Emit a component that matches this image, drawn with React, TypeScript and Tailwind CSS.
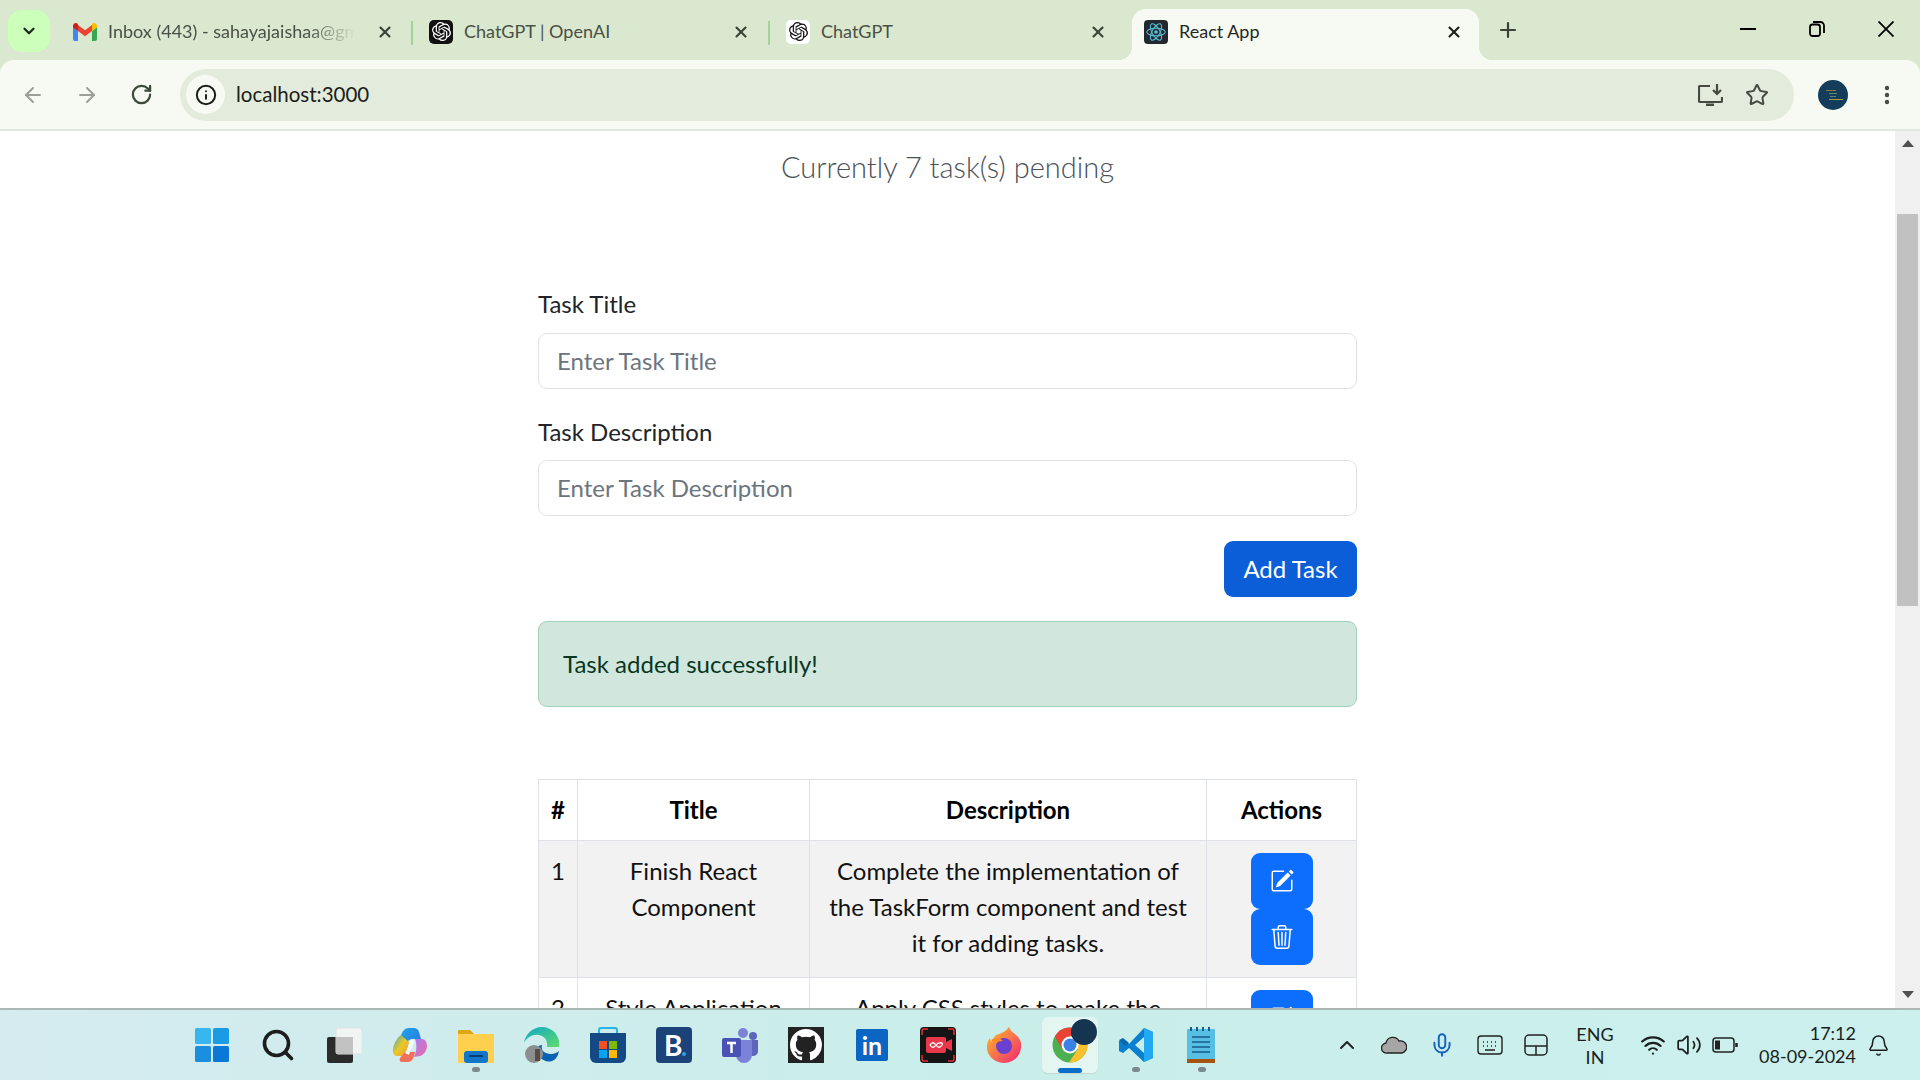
import React from 'react';
import { BsPencilSquare, BsTrash3 } from 'react-icons/bs';
import { SiOpenai } from 'react-icons/si';
import {
  ArrowLeft,
  ArrowRight,
  RotateCw,
  Info,
  X,
  Plus,
  Star,
  MoreVertical,
  ChevronDown,
  ChevronUp,
  Search,
  Mic,
  Bell,
  Wifi,
  Volume2,
} from 'lucide-react';

const font = "font-['Lato','Noto_Sans',sans-serif]";

function OpenAiMark({ dark }: { dark: boolean }) {
  return (
    <div className={`w-[24px] h-[24px] rounded-[5px] flex items-center justify-center ${dark ? 'bg-[#111] text-white' : 'bg-white text-[#111]'}`}>
      <SiOpenai size={19} />
    </div>
  );
}

function ReactMark() {
  return (
    <div className="w-[24px] h-[24px] rounded-[4px] bg-[#23272f] flex items-center justify-center">
      <svg width="22" height="22" viewBox="-12 -12 24 24" fill="none" stroke="#58c4dc" strokeWidth="1.1">
        <circle r="2" fill="#58c4dc" stroke="none" />
        <ellipse rx="10" ry="4.2" />
        <ellipse rx="10" ry="4.2" transform="rotate(60)" />
        <ellipse rx="10" ry="4.2" transform="rotate(120)" />
      </svg>
    </div>
  );
}

function GmailMark() {
  return (
    <svg width="24" height="20" viewBox="0 0 24 18">
      <path d="M0 4v12a2 2 0 0 0 2 2h3V8z" fill="#4285f4" />
      <path d="M24 4v12a2 2 0 0 1-2 2h-3V8z" fill="#34a853" />
      <path d="M19 2v6l5-3.6V3c0-2.4-2.8-3.8-4.8-2.2z" fill="#fbbc04" />
      <path d="M5 8V2l7 5.2L19 2v6l-7 5.2z" fill="#ea4335" />
      <path d="M0 3v1.400l5 3.600V2l-.200-1.200C2.800-.8 0 .6 0 3z" fill="#c5221f" />
    </svg>
  );
}

function Tab({ icon, title, active, className, fade }: { icon: React.ReactNode; title: string; active?: boolean; className: string; fade?: boolean }) {
  return (
    <div
      className={`${className} h-[51px] shrink-0 flex items-center pb-[6px] ${
        active
          ? "relative bg-[#f7faf2] rounded-t-[14px] before:content-[''] before:absolute before:left-[-14px] before:bottom-0 before:w-[14px] before:h-[14px] before:bg-[radial-gradient(circle_at_0_0,transparent_14px,#f7faf2_14.5px)] after:content-[''] after:absolute after:right-[-14px] after:bottom-0 after:w-[14px] after:h-[14px] after:bg-[radial-gradient(circle_at_100%_0,transparent_14px,#f7faf2_14.5px)]"
          : ''
      }`}
    >
      <div className="w-[24px] flex justify-center shrink-0">{icon}</div>
      <div
        className={`ml-[11px] flex-1 overflow-hidden whitespace-nowrap text-[18px] ${active ? 'text-[#23291f]' : 'text-[#4a5045]'} ${
          fade ? 'mask-r-from-80% mask-r-to-100%' : ''
        }`}
      >
        {title}
      </div>
      <X size={18} strokeWidth={2.8} className={`${active ? 'text-[#1e2419]' : 'text-[#3c4237]'} ${fade ? 'ml-[21px]' : 'ml-2'}`} />
    </div>
  );
}

function TabStrip() {
  return (
    <div className="h-[60px] flex items-end relative">
      <div className="w-[42px] h-[42px] mb-[8px] ml-[8px] rounded-[14px] bg-[#ccffb9] flex items-center justify-center shrink-0">
        <ChevronDown size={18} strokeWidth={3} className="text-[#1d2a1b]" />
      </div>
      <div className="ml-[11px] flex items-end">
        <Tab className="w-[350px] pl-[12px] pr-[17px]" icon={<GmailMark />} title="Inbox (443) - sahayajaishaa@gmail.com" fade />
        <div className="w-[2px] h-[24px] mb-[15px] bg-[#a5d29a]" />
        <Tab className="w-[355px] pl-[16px] pr-[18px]" icon={<OpenAiMark dark />} title="ChatGPT | OpenAI" />
        <div className="w-[2px] h-[24px] mb-[15px] bg-[#a5d29a]" />
        <Tab className="w-[362px] pl-[16px] pr-[25px]" icon={<OpenAiMark dark={false} />} title="ChatGPT" />
        <Tab className="w-[347px] pl-[12px] pr-[16px]" icon={<ReactMark />} title="React App" active />
      </div>
      <Plus size={24} strokeWidth={2.2} className="ml-[17px] mb-[18px] text-[#3c4237]" />
      <div className="ml-auto h-full flex items-center pb-[2px] text-black">
        <div className="w-[69px] flex justify-center">
          <svg width="16" height="16" viewBox="0 0 16 16" stroke="currentColor" strokeWidth="2">
            <path d="M0 8h16" />
          </svg>
        </div>
        <div className="w-[69px] flex justify-center">
          <svg width="16" height="16" viewBox="0 0 16 16" fill="none" stroke="currentColor" strokeWidth="1.800">
            <rect x="1" y="3.500" width="10" height="11.500" rx="2.500" />
            <path d="M4 1h7.500a3.500 3.500 0 0 1 3.500 3.500V12" />
          </svg>
        </div>
        <div className="w-[69px] flex justify-center">
          <svg width="16" height="16" viewBox="0 0 16 16" stroke="currentColor" strokeWidth="1.800">
            <path d="M.5.5l15 15M15.500.5l-15 15" />
          </svg>
        </div>
      </div>
    </div>
  );
}

function Toolbar() {
  return (
    <div className="h-[71px] bg-[#f7faf2] rounded-t-[14px] border-b-[2px] border-[#e3e8dc] flex items-center shrink-0">
      <ArrowLeft size={24} strokeWidth={2} className="ml-[21px] text-[#9aa096]" />
      <ArrowRight size={24} strokeWidth={2} className="ml-[30px] text-[#9aa096]" />
      <RotateCw size={23} strokeWidth={2.3} className="ml-[31px] text-[#3d4a39]" />
      <div className="ml-[27px] w-[1614px] h-[52px] rounded-full bg-[#e3ebdc] flex items-center">
        <div className="ml-[6px] w-[39px] h-[39px] rounded-full bg-[#f7faf2] flex items-center justify-center">
          <Info size={22} strokeWidth={2.2} className="text-[#1a1f18]" />
        </div>
        <span className="ml-[11px] text-[20.5px] text-[#1b2119]">localhost:3000</span>
        <svg width="25" height="22" viewBox="0 0 25 22" fill="none" stroke="#464a42" strokeWidth="2.200" className="ml-auto">
          <path d="M12 2H2a1 1 0 0 0-1 1v14a1 1 0 0 0 1 1h21a1 1 0 0 0 1-1v-4" />
          <path d="M8 21h8" strokeWidth="3" />
          <path d="M19 0v9M15 6l4 4 4-4" />
        </svg>
        <Star size={24} strokeWidth={2} className="ml-[22px] mr-[25px] text-[#464a42]" />
      </div>
      <div className="ml-[24px] w-[30px] h-[30px] rounded-full bg-[#143d5c] flex flex-col items-center justify-center gap-[2px]">
        <div className="w-[10px] h-[1px] ml-[-4px] bg-[#8a7b3c]" />
        <div className="w-[8px] h-[1px] bg-[#5c8a6a]" />
        <div className="w-[6px] h-[1px] bg-[#5c8a6a]" />
        <div className="w-[14px] h-[1px] ml-[6px] bg-[#a8a03c]" />
      </div>
      <MoreVertical size={24} strokeWidth={2.4} className="ml-[27px] text-[#464a42]" />
    </div>
  );
}

function ActionButtons({ cut }: { cut?: boolean }) {
  return (
    <div className="flex flex-col items-center">
      <button className="w-[62px] h-[56px] rounded-[9px] bg-[#0d6efd] text-white flex items-center justify-center">
        <BsPencilSquare size={24} />
      </button>
      {!cut && (
        <button className="w-[62px] h-[56px] rounded-[9px] bg-[#0d6efd] text-white flex items-center justify-center">
          <BsTrash3 size={24} />
        </button>
      )}
    </div>
  );
}

const cell = 'border border-[#dee2e6] px-[12px] py-[12px] align-top text-center';

function TaskPage() {
  return (
    <div className="flex-1 h-full overflow-hidden bg-white pt-[13px] text-[24px] leading-[36px] text-[#212529]">
      <p className="text-center text-[29px] leading-[45px] font-light text-[#4a5157]">Currently 7 task(s) pending</p>
      <div className="w-[819px] ml-[538px] mt-[97px]">
        <label className="block h-[36px]">Task Title</label>
        <div className="mt-[11px] h-[56px] border border-[#dee2e6] rounded-[9px] px-[18px] flex items-center text-[#6c757d]">Enter Task Title</div>
        <label className="block mt-[25px] h-[36px]">Task Description</label>
        <div className="mt-[10px] h-[56px] border border-[#dee2e6] rounded-[9px] px-[18px] flex items-center text-[#6c757d]">Enter Task Description</div>
        <div className="flex justify-end mt-[25px]">
          <button className="w-[133px] h-[56px] rounded-[9px] bg-[#0b5ed7] text-white">Add Task</button>
        </div>
        <div className="mt-[24px] h-[86px] border border-[#a3cfbb] rounded-[9px] bg-[#d1e7dd] text-[#0a3622] px-[24px] flex items-center">Task added successfully!</div>
        <table className="mt-[72px] w-[818px] table-fixed border-collapse">
          <colgroup>
            <col className="w-[39px]" />
            <col className="w-[232px]" />
            <col className="w-[397px]" />
            <col className="w-[150px]" />
          </colgroup>
          <thead>
            <tr className="text-black">
              <th className={cell + ' font-bold !px-0'}>#</th>
              <th className={cell + ' font-bold'}>Title</th>
              <th className={cell + ' font-bold'}>Description</th>
              <th className={cell + ' font-bold'}>Actions</th>
            </tr>
          </thead>
          <tbody>
            <tr className="bg-[#f2f2f2] text-[#111]">
              <td className={cell + ' !px-0'}>1</td>
              <td className={cell}>Finish React Component</td>
              <td className={cell}>Complete the implementation of the TaskForm component and test it for adding tasks.</td>
              <td className={cell}>
                <ActionButtons />
              </td>
            </tr>
            <tr className="text-[#111]">
              <td className={cell + ' !px-0'}>2</td>
              <td className={cell}>Style Application</td>
              <td className={cell}>Apply CSS styles to make the application look nice.</td>
              <td className={cell}>
                <ActionButtons cut />
              </td>
            </tr>
          </tbody>
        </table>
      </div>
    </div>
  );
}

function Scrollbar() {
  return (
    <div className="w-[25px] h-full bg-[#f0f0f0] flex flex-col items-center shrink-0">
      <div className="mt-[9px] w-0 h-0 border-x-[6px] border-x-transparent border-b-[7px] border-b-[#505050]" />
      <div className="mt-[67px] w-[21px] h-[392px] bg-[#c1c1c1]" />
      <div className="mt-auto mb-[10px] w-0 h-0 border-x-[6px] border-x-transparent border-t-[7px] border-t-[#505050]" />
    </div>
  );
}

function TaskIcon({ children, dot, active }: { children: React.ReactNode; dot?: boolean; active?: boolean }) {
  return (
    <div className="relative w-[66px] h-[66px] flex items-center justify-center">
      {active && <div className="absolute left-[5px] top-[5px] w-[56px] h-[56px] rounded-[6px] bg-[#e4f6f2] shadow-[0_1px_1px_#c2d6d2]" />}
      <div className="relative flex items-center justify-center">{children}</div>
      {dot && <div className="absolute bottom-[6px] left-[29px] w-[8px] h-[5px] rounded-full bg-[#7d8a8c]" />}
      {active && <div className="absolute bottom-[5px] left-[21px] w-[24px] h-[5px] rounded-full bg-[#0b6fc9]" />}
    </div>
  );
}

function Taskbar() {
  return (
    <div className="h-[72px] shrink-0 border-t-[2px] border-[#a9b8b5] bg-gradient-to-r from-[#d5ebf0] via-[#c9eee9] to-[#cbf0ee] flex items-center relative">
      <div className="ml-[179px] flex items-center">
        <TaskIcon>
          <svg width="36" height="36" viewBox="0 0 36 36">
            <rect x="1" y="1" width="16" height="16" rx="1.500" fill="#38b6ef" />
            <rect x="19" y="1" width="16" height="16" rx="1.500" fill="#1c9be5" />
            <rect x="1" y="19" width="16" height="16" rx="1.500" fill="#1a8fdf" />
            <rect x="19" y="19" width="16" height="16" rx="1.500" fill="#0a78d6" />
          </svg>
        </TaskIcon>
        <TaskIcon>
          <Search size={36} strokeWidth={2.4} className="text-[#1d1d1d]" />
        </TaskIcon>
        <TaskIcon>
          <svg width="36" height="36" viewBox="0 0 36 36">
            <rect x="1" y="10" width="26" height="26" rx="2" fill="#2b2b2b" />
            <rect x="10" y="1" width="26" height="26" rx="2" fill="#f2f4f4" stroke="#dde2e2" />
            <rect x="10" y="10" width="17" height="17" fill="#c2c2c2" />
          </svg>
        </TaskIcon>
        <TaskIcon>
          <svg width="36" height="36" viewBox="0 0 36 36">
            <defs>
              <linearGradient id="copa" x1="0" y1="0" x2="1" y2="1">
                <stop offset="0" stopColor="#1ea7e8" />
                <stop offset="1" stopColor="#2e6fe0" />
              </linearGradient>
              <linearGradient id="copb" x1="0" y1="0" x2="1" y2="1">
                <stop offset="0" stopColor="#3ca6c8" />
                <stop offset="0.5" stopColor="#e8c72a" />
                <stop offset="1" stopColor="#f0a030" />
              </linearGradient>
              <linearGradient id="copc" x1="0" y1="0" x2="1" y2="1">
                <stop offset="0" stopColor="#a97cf0" />
                <stop offset="1" stopColor="#ec6aa6" />
              </linearGradient>
            </defs>
            <path d="M9 9c1-5 4-8 8-8h5c2 0 4 1 5 4l2 7h-8c-3 0-5 1-6 4l-2 6z" fill="url(#copa)" />
            <path d="M9 8c-4 3-7 8-8 14-.5 4 1 7 4 7h6c2 0 3-2 4-5l2-9c-3-3-6-5-8-7z" fill="url(#copb)" />
            <path d="M23 12h7c3 0 5 3 5 7s-3 9-7 10l-6 1c3-6 3-12 1-18z" fill="url(#copc)" />
            <path d="M13 25h10c-1 6-3 10-7 10h-6c-2 0-3-2-2-4z" fill="#f0705a" />
            <path d="M21 13l-6 14" stroke="#f4fbfb" strokeWidth="4" />
          </svg>
        </TaskIcon>
        <TaskIcon dot>
          <svg width="36" height="36" viewBox="0 0 36 36">
            <path d="M0 4a1 1 0 0 1 1-1h11l4 4h20v6H0z" fill="#dca60f" />
            <rect y="7" width="36" height="29" rx="1" fill="#ffcf4d" />
            <rect x="6" y="24" width="24" height="12" rx="3" fill="#0f76c9" />
            <rect x="11" y="28" width="14" height="2" fill="#083f70" />
          </svg>
        </TaskIcon>
        <TaskIcon>
          <svg width="36" height="36" viewBox="0 0 36 36">
            <defs>
              <linearGradient id="edg" x1="0" y1="0" x2="1" y2="1">
                <stop offset="0" stopColor="#0fa6c9" />
                <stop offset="1" stopColor="#5fdc6c" />
              </linearGradient>
            </defs>
            <path d="M18 0C8 0 1 8 0 16c3-6 9-9 15-8 6 1 9 6 8 12h12c2-10-6-20-17-20z" fill="url(#edg)" />
            <path d="M35 24c-3 3-9 4-13 2-3-1-5-4-4-8-5 0-6 6-4 10s9 8 14 6 6-6 7-10z" fill="#0a62b4" />
            <circle cx="10" cy="27" r="9" fill="#8c8f90" />
            <rect x="11" y="22" width="5" height="12" fill="#5a4b40" />
          </svg>
        </TaskIcon>
        <TaskIcon>
          <svg width="36" height="36" viewBox="0 0 36 36">
            <path d="M9 6V3a2 2 0 0 1 2-2h14a2 2 0 0 1 2 2v3" fill="none" stroke="#25b6e8" strokeWidth="2" />
            <path d="M0 6h36v24a6 6 0 0 1-6 6H6a6 6 0 0 1-6-6z" fill="#134a85" />
            <rect x="9" y="14" width="8" height="8" fill="#f25022" />
            <rect x="19" y="14" width="8" height="8" fill="#7fba00" />
            <rect x="9" y="23" width="8" height="8" fill="#00a4ef" />
            <rect x="19" y="23" width="8" height="8" fill="#ffb900" />
          </svg>
        </TaskIcon>
        <TaskIcon>
          <div className="w-[36px] h-[36px] rounded-[4px] bg-[#1b4279] text-white font-bold text-[28px] leading-[36px] relative pl-[8px]">
            B
            <span className="absolute right-[6px] bottom-[7px] w-[4px] h-[4px] rounded-full bg-[#2aa3e8]" />
          </div>
        </TaskIcon>
        <TaskIcon>
          <svg width="36" height="36" viewBox="0 0 36 36">
            <circle cx="21" cy="6" r="5" fill="#7b83d8" />
            <circle cx="31" cy="9" r="4" fill="#5d65bf" />
            <path d="M26 13h10v11a5 5 0 0 1-9 3z" fill="#5d65bf" />
            <path d="M11 13h19v15a8 8 0 0 1-16 0z" fill="#7b83d8" />
            <rect y="11" width="19" height="19" rx="2" fill="#4a53b5" />
            <path d="M5 16h9M9.500 16v10" stroke="#fff" strokeWidth="2.500" />
          </svg>
        </TaskIcon>
        <TaskIcon>
          <div className="w-[36px] h-[36px] bg-[#222] flex items-center justify-center">
            <svg width="32" height="32" viewBox="0 0 16 16" fill="#fff">
              <path d="M8 0C3.580 0 0 3.580 0 8c0 3.540 2.290 6.530 5.470 7.590.4.070.55-.170.55-.380 0-.190-.010-.820-.010-1.490-2.010.370-2.530-.490-2.690-.940-.090-.230-.480-.940-.820-1.130-.280-.150-.680-.520-.010-.530.630-.010 1.080.580 1.230.820.720 1.210 1.870.870 2.330.660.070-.520.280-.870.510-1.070-1.780-.200-3.640-.890-3.640-3.950 0-.870.310-1.590.820-2.150-.080-.200-.360-1.020.080-2.120 0 0 .670-.210 2.200.820.640-.180 1.320-.270 2-.270s1.360.090 2 .270c1.530-1.040 2.200-.820 2.200-.820.440 1.100.160 1.920.080 2.120.510.560.820 1.270.820 2.150 0 3.070-1.870 3.750-3.650 3.950.290.250.540.730.540 1.480 0 1.070-.010 1.930-.010 2.200 0 .210.150.460.550.380A8.010 8.010 0 0 0 16 8c0-4.420-3.580-8-8-8z" />
            </svg>
          </div>
        </TaskIcon>
        <TaskIcon>
          <div className="w-[32px] h-[32px] rounded-[2px] bg-[#0a66c2] text-white font-bold text-[25px] leading-[32px] text-center">in</div>
        </TaskIcon>
        <TaskIcon>
          <svg width="36" height="36" viewBox="0 0 36 36">
            <rect width="36" height="36" rx="4" fill="#141414" />
            <path d="M2 8V4a2 2 0 0 1 2-2h4M28 2h4a2 2 0 0 1 2 2v4M2 28v4a2 2 0 0 0 2 2h4M34 28v4a2 2 0 0 1-2 2h-4" fill="none" stroke="#e03036" strokeWidth="1.500" />
            <rect x="6" y="10" width="20" height="16" rx="2" fill="#e8374a" />
            <path d="M26 15l6-3v12l-6-3z" fill="#e8374a" />
            <path d="M10 18c2-3 4-3 6 0s4 3 6 0-4-3-6 0-4 3-6 0z" fill="none" stroke="#fff" strokeWidth="1.300" />
          </svg>
        </TaskIcon>
        <TaskIcon>
          <svg width="36" height="36" viewBox="0 0 36 36">
            <defs>
              <linearGradient id="ffx" x1="0" y1="0" x2="1" y2="1">
                <stop offset="0" stopColor="#ffc41f" />
                <stop offset="1" stopColor="#f0247a" />
              </linearGradient>
            </defs>
            <path d="M23 0c1 3 3 5 6 7 5 4 7 9 6 14-1 9-8 15-17 15S0 28 1 19c0-3 1-6 3-8 0 2 1 3 2 4 1-4 3-7 7-8 3-1 7-3 10-7z" fill="url(#ffx)" />
            <circle cx="18" cy="19" r="8" fill="#6b3fcf" />
            <path d="M5 13c4-3 10-2 12 1-4 0-6 1-7 3z" fill="#ff8a1f" />
          </svg>
        </TaskIcon>
        <TaskIcon active>
          <svg width="36" height="36" viewBox="-18 -18 36 36">
            <circle r="17.500" fill="#4caf50" />
            <path d="M-15.200-8.700A17.500 17.500 0 0 1 15.200-8.700L0-8.700-7.600 4.400z" fill="#ea4335" />
            <path d="M15.200-8.700A17.500 17.500 0 0 1-1 17.500L7.600 4.400 0-8.700z" fill="#fbc02d" />
            <circle r="8.500" fill="#fff" />
            <circle r="6.500" fill="#3b82e8" />
          </svg>
          <div className="absolute top-[-8px] right-[-9px] w-[26px] h-[26px] rounded-full bg-[#143450]" />
        </TaskIcon>
        <TaskIcon dot>
          <svg width="36" height="36" viewBox="0 0 36 36">
            <path d="M26 1l9 4v26l-9 4-15-14-6 5-4-2v-10l4-2 6 5z" fill="#0a7fd0" />
            <path d="M26 1l9 4v26l-9 4z" fill="#23a8f2" />
            <path d="M26 10l-9 8 9 8z" fill="#c9eee9" />
            <path d="M1 13l4-2 6 5-4 3z" fill="#0668ad" />
          </svg>
        </TaskIcon>
        <TaskIcon dot>
          <svg width="30" height="38" viewBox="0 0 30 38">
            <rect y="3" width="28" height="31" rx="1" fill="#58bfe4" />
            <rect y="33" width="28" height="4" fill="#a8530e" />
            <path d="M5 11h18M5 16h18M5 21h18M5 26h18" stroke="#135d8c" strokeWidth="1.600" />
            <path d="M4 1v4M10 1v4M16 1v4M22 1v4" stroke="#135d8c" strokeWidth="2" />
          </svg>
        </TaskIcon>
      </div>
      <div className="ml-[100px] flex items-center text-[#1b1f20]">
        <ChevronUp size={24} strokeWidth={2} className="text-[#222]" />
        <svg width="26" height="18" viewBox="0 0 26 18" className="ml-[22px]">
          <path d="M6 17a5 5 0 0 1-1-10 7 7 0 0 1 13-2 6 6 0 0 1 3 12z" fill="#a6a6a6" stroke="#222" strokeWidth="1.300" />
        </svg>
        <Mic size={26} strokeWidth={1.8} className="ml-[22px] text-[#1763c0]" />
        <svg width="26" height="20" viewBox="0 0 26 20" fill="none" stroke="#222" strokeWidth="1.400" className="ml-[22px]">
          <rect x="1" y="1" width="24" height="18" rx="3" />
          <path d="M6 7h1M10 7h1M14 7h1M18 7h1M6 11h1M10 11h1M14 11h1M18 11h1M8 15h10" />
        </svg>
        <svg width="24" height="22" viewBox="0 0 24 22" fill="none" stroke="#222" strokeWidth="1.500" className="ml-[21px]">
          <rect x="1" y="1" width="22" height="20" rx="4" />
          <path d="M1 12h22M12 12v9" />
        </svg>
        <div className="ml-[22px] w-[50px] text-center text-[18px] leading-[23px] mt-[1px]">
          ENG
          <br />
          IN
        </div>
        <Wifi size={26} strokeWidth={2} className="ml-[20px]" />
        <Volume2 size={26} strokeWidth={1.6} className="ml-[10px]" />
        <svg width="26" height="16" viewBox="0 0 26 16" fill="none" stroke="#222" strokeWidth="1.500" className="ml-[10px]">
          <rect x="1" y="1" width="21" height="14" rx="3" />
          <rect x="3" y="3.500" width="5" height="9" fill="#222" stroke="none" />
          <path d="M24.500 6v4" strokeWidth="2.500" />
        </svg>
        <div className="ml-[21px] w-[97px] text-right text-[18px] leading-[23px]">
          17:12
          <br />
          08-09-2024
        </div>
        <Bell size={23} strokeWidth={1.6} className="ml-[11px]" />
      </div>
    </div>
  );
}

export default function App() {
  return (
    <div className={`w-[1920px] h-[1080px] overflow-hidden flex flex-col bg-white ${font}`}>
      <div className="bg-[#d9e8cf] shrink-0">
        <TabStrip />
        <Toolbar />
      </div>
      <div className="flex-1 min-h-0 flex">
        <TaskPage />
        <Scrollbar />
      </div>
      <Taskbar />
    </div>
  );
}
